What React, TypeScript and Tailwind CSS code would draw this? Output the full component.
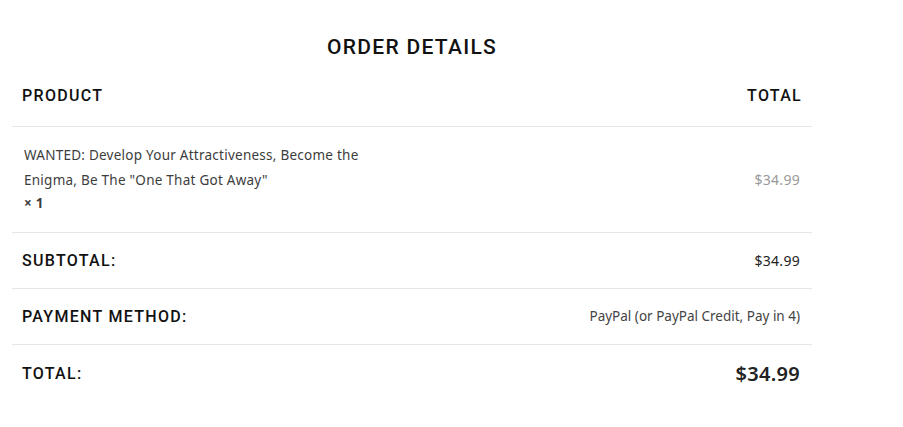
const head = "font-['Roboto',sans-serif] font-medium text-[#111] uppercase tracking-[1.3px]";
const body = "font-['Noto_Sans','Open_Sans',sans-serif]";

const Row = ({ label, children, cls }: { label: string; children: React.ReactNode; cls: string }) => (
  <div className={`flex items-center justify-between border-t border-[#e6e6e6] px-[10px] ${cls}`}>
    <span className={`${head} text-[16px]`}>{label}</span>
    {children}
  </div>
);

const App = () => {
  return (
    <div className="bg-white min-h-[427px] w-[903px] pt-[31px]">
      <div className="ml-[12px] w-[800px]">
        <h2 className={`${head} text-center text-[21px] leading-[32px] tracking-[0px]`}>Order Details</h2>

        <div className="mt-[3px]">
          <div className="flex items-center justify-between px-[10px] h-[60px]">
            <span className={`${head} text-[16px]`}>Product</span>
            <span className={`${head} text-[16px]`}>Total</span>
          </div>

          <div className="flex items-center justify-between border-t border-[#e6e6e6] pl-[12px] pr-[12px] h-[106px]">
            <div className={`${body} text-[13.5px] tracking-[0.25px] leading-[25px] text-[#3d3d3d] w-[345px] -mt-[3px]`}>
              <div>WANTED: Develop Your Attractiveness, Become the Enigma, Be The "One That Got Away"</div>
              <div className="font-bold leading-[20px]">× 1</div>
            </div>
            <span className={`${body} text-[14px] tracking-[0.3px] text-[#999]`}>$34.99</span>
          </div>

          <Row label="Subtotal:" cls="h-[56px]">
            <span className={`${body} text-[14px] tracking-[0.3px] text-[#222] pr-[2px]`}>$34.99</span>
          </Row>

          <Row label="Payment method:" cls="h-[56px]">
            <span className={`${body} text-[13.5px] text-[#444] pr-[2px]`}>PayPal (or PayPal Credit, Pay in 4)</span>
          </Row>

          <Row label="Total:" cls="h-[58px]">
            <span className={`${body} text-[20px] font-semibold tracking-[0.3px] text-[#222] pr-[2px]`}>$34.99</span>
          </Row>
        </div>
      </div>
    </div>
  );
};

export default App;
